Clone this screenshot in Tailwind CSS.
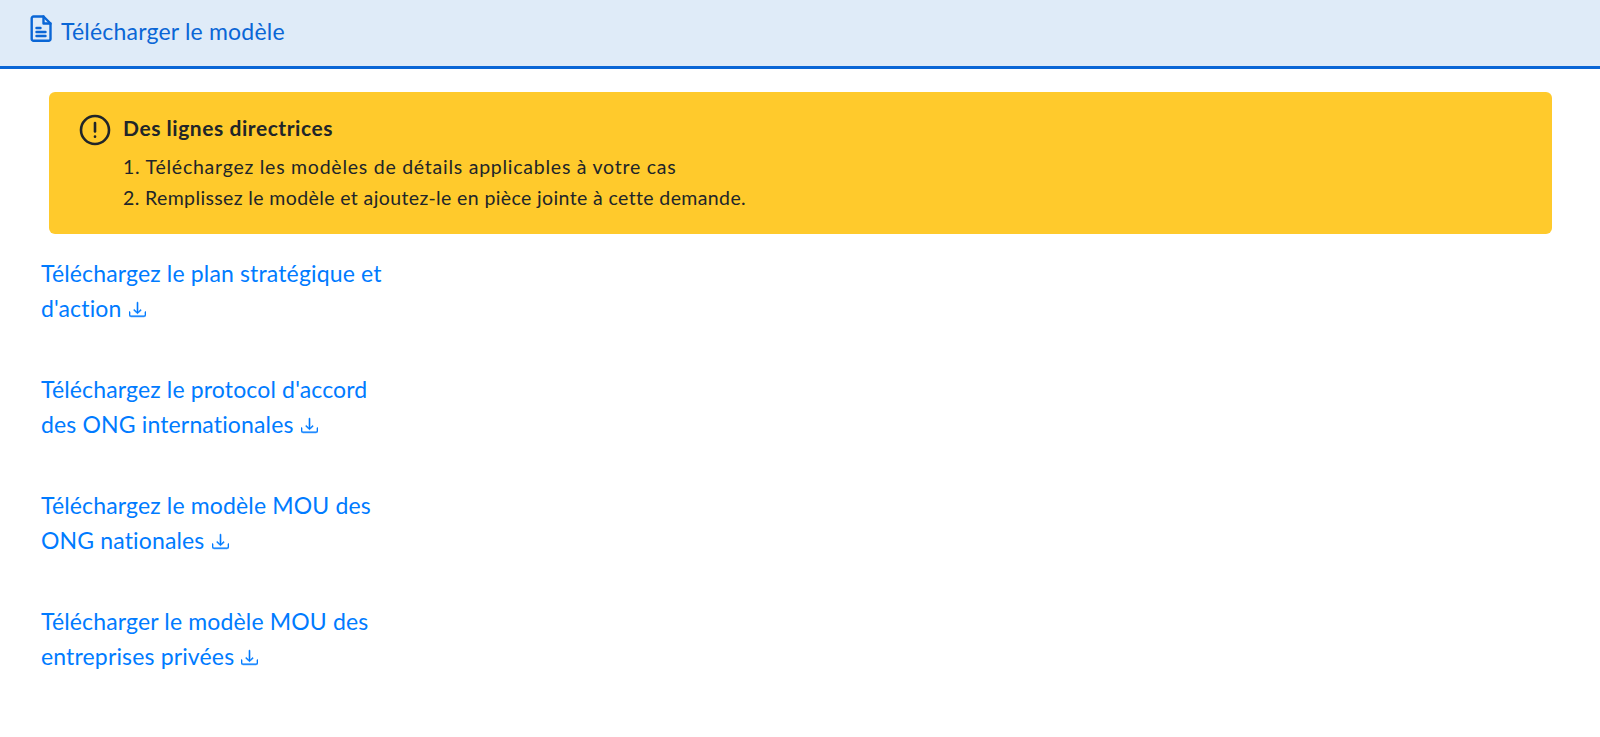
<!DOCTYPE html>
<html lang="fr">
<head>
    <meta charset="UTF-8">
    <title>Télécharger le modèle</title>
    <script src="https://cdn.jsdelivr.net/npm/@tailwindcss/browser@4"></script>
</head>
<body class="bg-white font-['Lato','Open_Sans',sans-serif] h-[737px] overflow-hidden">

    <!-- En-tête -->
    <div class="h-[69px] bg-[#dfebf8] border-b-[3px] border-[#0a66d6] flex items-center pl-[30px] pb-[3px] text-[#0a66d6]">
        <svg class="w-[22px] h-[27px] mb-[6px]" viewBox="0 0 22 27" fill="none" stroke="currentColor" stroke-width="2.4" stroke-linejoin="round" stroke-linecap="round">
            <path d="M3.500 1.500h10l7 7v15.500a1.800 1.800 0 0 1-1.800 1.800H3.500a1.800 1.800 0 0 1-1.800-1.800V3.300a1.800 1.800 0 0 1 1.800-1.800z"/>
            <path d="M13.500 1.500v7h7"/>
            <path d="M6.500 13h4M6.500 17h9M6.500 21h9"/>
        </svg>
        <span class="ml-[9px] text-[23px] tracking-[0.2px] leading-none">Télécharger le modèle</span>
    </div>

    <!-- Lignes directrices -->
    <div class="mt-[23px] ml-[49px] mr-[48px] h-[142px] bg-[#ffca2c] rounded-[6px] pt-[22px] pl-[30px] text-[#212529] flex">
        <svg class="w-[32px] h-[32px] shrink-0" viewBox="0 0 32 32" fill="none" stroke="currentColor" stroke-width="2.6" stroke-linecap="round">
            <circle cx="16" cy="16" r="14"/>
            <path d="M16 9v8.500"/>
            <path d="M16 22.500v.2"/>
        </svg>
        <div class="ml-[12px]">
            <h4 class="mt-[2px] text-[21px] tracking-[0.55px] leading-[24px] font-bold">Des lignes directrices</h4>
            <ol class="mt-[11px] text-[19.500px] tracking-[0.38px] leading-[31px]">
                <li class="tracking-[0.75px]">1. Téléchargez les modèles de détails applicables à votre cas</li>
                <li>2. Remplissez le modèle et ajoutez-le en pièce jointe à cette demande.</li>
            </ol>
        </div>
    </div>

    <!-- Modèles à télécharger -->
    <div class="mt-[22px] pl-[41px] flex flex-col gap-[46px] text-[#007bff] text-[23px] tracking-[0.15px] leading-[35px]">
        <a href="#" class="block w-[360px]">Téléchargez le plan stratégique et d'action
            <svg class="inline w-[17px] h-[17px] ml-[1px] align-[-1px]" viewBox="0 0 16 16" fill="currentColor" stroke="currentColor" stroke-width="0.5"><path d="M.5 9.900a.5.5 0 0 1 .5.5v2.500a1 1 0 0 0 1 1h12a1 1 0 0 0 1-1v-2.500a.5.5 0 0 1 1 0v2.500a2 2 0 0 1-2 2H2a2 2 0 0 1-2-2v-2.500a.5.5 0 0 1 .5-.5z"/><path d="M7.650 11.850a.5.5 0 0 0 .7 0l3-3a.5.5 0 0 0-.7-.7L8.500 10.300V1.500a.5.5 0 0 0-1 0v8.800L5.350 8.150a.5.5 0 1 0-.7.7l3 3z"/></svg>
        </a>
        <a href="#" class="block w-[360px]">Téléchargez le protocol d'accord des ONG internationales
            <svg class="inline w-[17px] h-[17px] ml-[1px] align-[-1px]" viewBox="0 0 16 16" fill="currentColor" stroke="currentColor" stroke-width="0.5"><path d="M.5 9.900a.5.5 0 0 1 .5.5v2.500a1 1 0 0 0 1 1h12a1 1 0 0 0 1-1v-2.500a.5.5 0 0 1 1 0v2.500a2 2 0 0 1-2 2H2a2 2 0 0 1-2-2v-2.500a.5.5 0 0 1 .5-.5z"/><path d="M7.650 11.850a.5.5 0 0 0 .7 0l3-3a.5.5 0 0 0-.7-.7L8.500 10.300V1.500a.5.5 0 0 0-1 0v8.800L5.350 8.150a.5.5 0 1 0-.7.7l3 3z"/></svg>
        </a>
        <a href="#" class="block w-[360px]">Téléchargez le modèle MOU des ONG nationales
            <svg class="inline w-[17px] h-[17px] ml-[1px] align-[-1px]" viewBox="0 0 16 16" fill="currentColor" stroke="currentColor" stroke-width="0.5"><path d="M.5 9.900a.5.5 0 0 1 .5.5v2.500a1 1 0 0 0 1 1h12a1 1 0 0 0 1-1v-2.500a.5.5 0 0 1 1 0v2.500a2 2 0 0 1-2 2H2a2 2 0 0 1-2-2v-2.500a.5.5 0 0 1 .5-.5z"/><path d="M7.650 11.850a.5.5 0 0 0 .7 0l3-3a.5.5 0 0 0-.7-.7L8.500 10.300V1.500a.5.5 0 0 0-1 0v8.800L5.350 8.150a.5.5 0 1 0-.7.7l3 3z"/></svg>
        </a>
        <a href="#" class="block w-[360px]">Télécharger le modèle MOU des entreprises privées
            <svg class="inline w-[17px] h-[17px] ml-[1px] align-[-1px]" viewBox="0 0 16 16" fill="currentColor" stroke="currentColor" stroke-width="0.5"><path d="M.5 9.900a.5.5 0 0 1 .5.5v2.500a1 1 0 0 0 1 1h12a1 1 0 0 0 1-1v-2.500a.5.5 0 0 1 1 0v2.500a2 2 0 0 1-2 2H2a2 2 0 0 1-2-2v-2.500a.5.5 0 0 1 .5-.5z"/><path d="M7.650 11.850a.5.5 0 0 0 .7 0l3-3a.5.5 0 0 0-.7-.7L8.500 10.300V1.500a.5.5 0 0 0-1 0v8.800L5.350 8.150a.5.5 0 1 0-.7.7l3 3z"/></svg>
        </a>
    </div>

</body>
</html>
